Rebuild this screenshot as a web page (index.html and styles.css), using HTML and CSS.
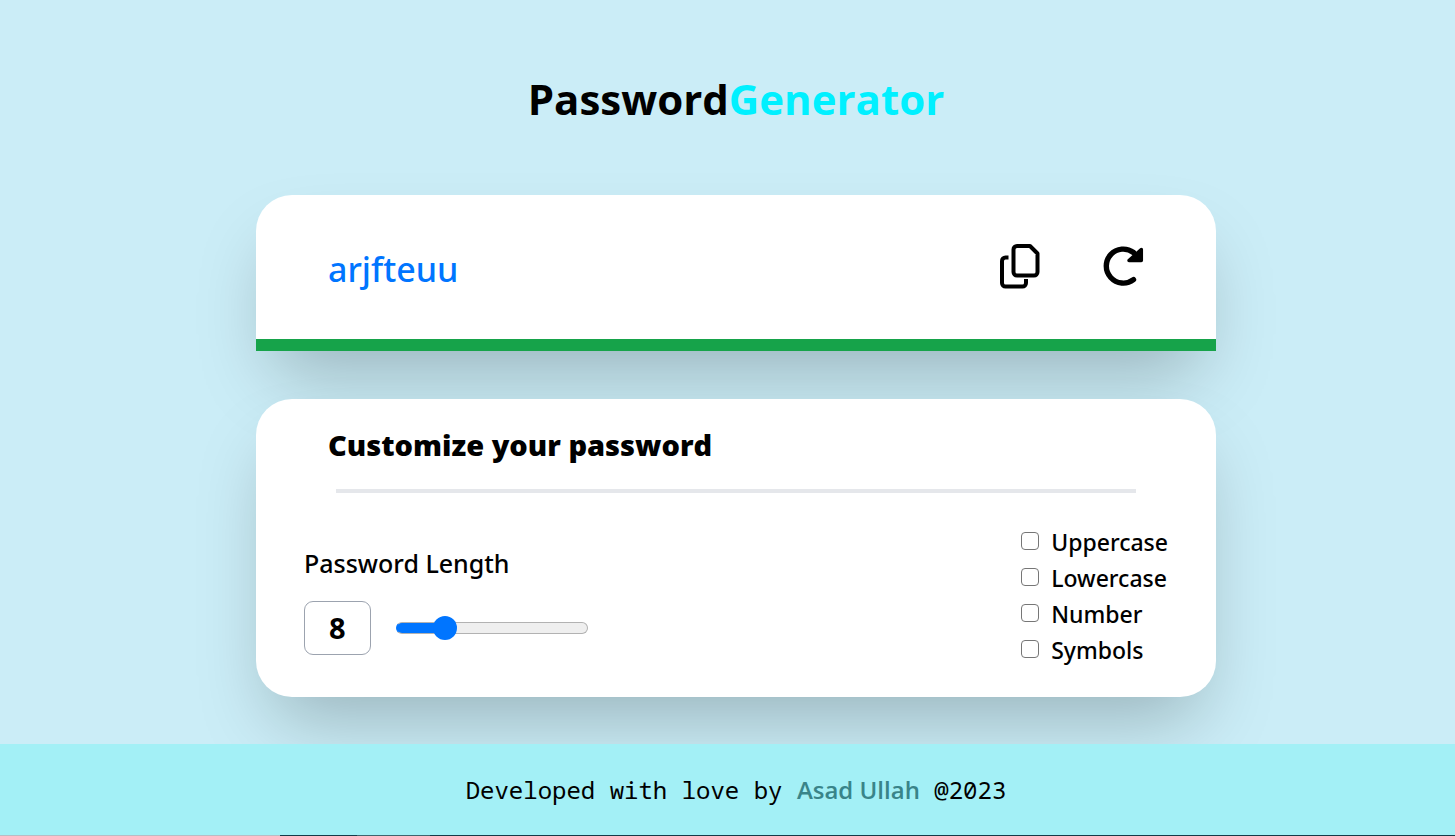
FILE: index.html
```html
<!DOCTYPE html>
<html lang="en">
<head>
<meta charset="utf-8">
<meta name="viewport" content="width=device-width, initial-scale=1">
<title>Password Generator</title>
<link rel="stylesheet" href="styles.css">
</head>
<body>
<main class="page">
  <h1 class="title">Password<span class="title-accent">Generator</span></h1>
  <section class="card result" aria-label="Generated password">
    <output class="password">arjfteuu</output>
    <div class="actions">
      <button class="icon-button" type="button" aria-label="Copy password">
        <svg width="42" height="46" viewBox="0 0 42 46" fill="none" stroke="currentColor" stroke-width="4" stroke-linecap="butt" stroke-linejoin="round">
          <path d="M17 2h13l7.500 7.500v18.500a3.500 3.500 0 0 1-3.500 3.500H17a3.500 3.500 0 0 1-3.500-3.500V5.500A3.500 3.500 0 0 1 17 2Z"/>
          <path d="M8.500 13.500H5.500A3.500 3.500 0 0 0 2 17v22a3.500 3.500 0 0 0 3.500 3.500H22.500a3.500 3.500 0 0 0 3.500-3.500v-4"/>
        </svg>
      </button>
      <button class="icon-button" type="button" aria-label="Generate new password">
        <svg width="42" height="46" viewBox="0 0 42 46" fill="none" stroke="currentColor" stroke-width="5.400" stroke-linecap="round">
          <path d="M31.500 35.700A17 17 0 1 1 31.500 8.500"/>
          <path d="M39.300 5.500V16.500H27Z" fill="currentColor" stroke-width="3.500" stroke-linejoin="round"/>
        </svg>
      </button>
    </div>
  </section>
  <section class="card settings">
    <h2 class="heading">Customize your password</h2>
    <hr class="rule">
    <div class="options">
      <div class="length">
        <label class="length-label" for="length">Password Length</label>
        <div class="length-row">
          <output class="length-value" for="length">8</output>
          <input class="slider" id="length" type="range" min="0" max="36" value="8">
        </div>
      </div>
      <div class="checks">
        <label class="check"><input class="box" type="checkbox">Uppercase</label>
        <label class="check"><input class="box" type="checkbox">Lowercase</label>
        <label class="check"><input class="box" type="checkbox">Number</label>
        <label class="check"><input class="box" type="checkbox">Symbols</label>
      </div>
    </div>
  </section>
</main>
<footer class="footer">
  <p class="credit">Developed with love by <a class="author" href="#">Asad Ullah</a> @2023</p>
  <div class="edge"></div>
</footer>
</body>
</html>
```
FILE: styles.css
```css
* {
  box-sizing: border-box;
  margin: 0;
}

body {
  min-height: 100vh;
  display: flex;
  flex-direction: column;
  background: #cbedf7;
  color: #000;
  font-family: "Segoe UI", "Noto Sans", "Open Sans", sans-serif;
  overflow-x: hidden;
}

.page {
  flex: 1;
  display: flex;
  flex-direction: column;
  align-items: center;
  gap: 48px;
  padding: 51px 0 47px 17px;
}

.title {
  padding: 16px 0;
  font-family: "Segoe UI", "Open Sans", sans-serif;
  font-size: 42px;
  line-height: 64px;
  font-weight: 700;
}

.title-accent {
  color: #00f0ff;
}

.card {
  width: 90%;
  max-width: 960px;
  background: #fff;
  box-shadow: 0 38px 75px -18px rgba(0, 0, 0, 0.25);
}

.result {
  display: flex;
  align-items: center;
  justify-content: space-between;
  padding: 42px 72px;
  border-bottom: 12px solid #16a34a;
  border-radius: 36px 36px 0 0;
}

.password {
  padding-top: 4px;
  color: #0075ff;
  font-size: 34px;
  line-height: 56px;
  font-weight: 500;
}

.actions {
  display: flex;
  gap: 60px;
}

.icon-button {
  display: flex;
  padding: 0;
  border: 0;
  background: none;
  color: #000;
  cursor: pointer;
}

.settings {
  position: relative;
  padding: 25px 48px 29px;
  border-radius: 36px;
}

.heading {
  padding: 0 24px;
  font-family: "Segoe UI", "Open Sans", sans-serif;
  font-size: 29px;
  line-height: 42px;
  font-weight: 800;
}

.rule {
  height: 4px;
  margin: 23px 32px 0;
  border: 0;
  background: #e5e7eb;
}

.options {
  display: flex;
  justify-content: space-between;
  align-items: flex-end;
  margin-top: 31px;
}

.length {
  display: flex;
  flex-direction: column;
  gap: 20px;
  padding-bottom: 13px;
}

.length-label {
  font-size: 25px;
  line-height: 36px;
  font-weight: 500;
}

.length-row {
  display: flex;
  align-items: center;
  gap: 25px;
}

.length-value {
  padding: 8px 24px;
  border: 1px solid #9ca3af;
  border-radius: 9px;
  font-size: 29px;
  line-height: 36px;
  font-weight: 700;
}

.slider {
  --filled: 25%;
  appearance: none;
  width: 192px;
  height: 24px;
  margin: 0;
  background: none;
}

.slider::-webkit-slider-runnable-track {
  height: 12px;
  border: 1px solid #b2b2b2;
  border-left-color: #0075ff;
  border-radius: 6px;
  background: linear-gradient(to right, #0075ff var(--filled), #efefef var(--filled)) border-box;
}

.slider::-webkit-slider-thumb {
  appearance: none;
  width: 24px;
  height: 24px;
  margin-top: -7px;
  border-radius: 50%;
  background: #0075ff;
}

.checks {
  display: flex;
  flex-direction: column;
}

.check {
  display: flex;
  align-items: center;
  gap: 12px;
  font-size: 23px;
  line-height: 36px;
  font-weight: 500;
}

.box {
  appearance: none;
  width: 18px;
  height: 18px;
  margin: 0 0 3px;
  border: 1px solid #767676;
  border-radius: 4px;
  background: #fff;
}

.box:checked {
  background: #0075ff;
}

.footer {
  position: relative;
  padding: 28px 0 0;
  background: #a3f0f6;
  text-align: center;
}

.credit {
  padding: 0 0 27px 17px;
  font-family: Consolas, "Noto Sans Mono", "DejaVu Sans Mono", monospace;
  font-size: 24px;
  line-height: 36px;
}

.author {
  color: #398489;
  font-family: "Segoe UI", "Open Sans", sans-serif;
  font-weight: 600;
  text-decoration: none;
}

.edge {
  height: 1px;
  background: linear-gradient(to right, #b9bcc4 280px, #153a48 280px, #153a48 357px, #3f646e 357px, #3f646e 430px, #153a48 430px);
}
```
